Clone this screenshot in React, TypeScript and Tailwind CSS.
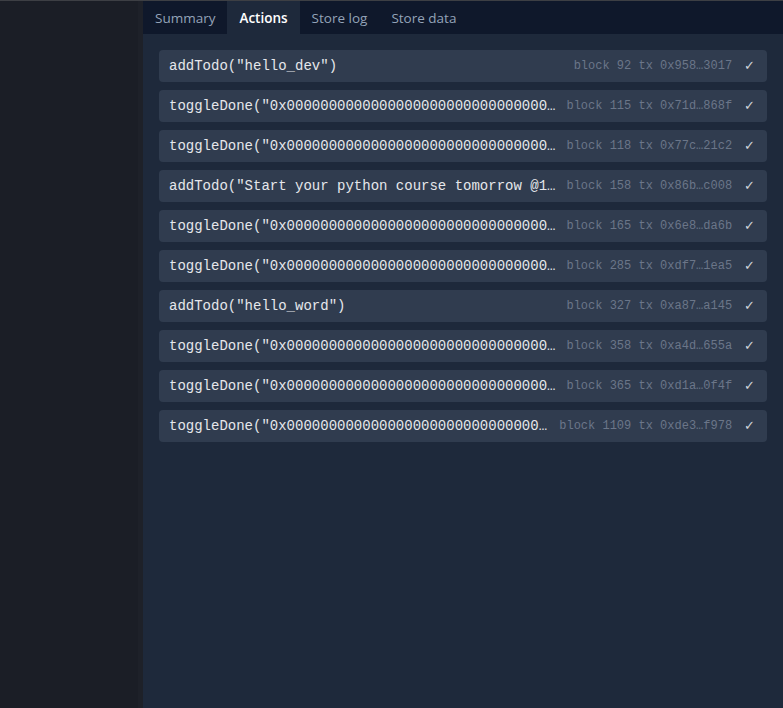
import { useState } from 'react';

type Action = { call: string; block: number; tx: string };

const hash = '0x' + '0'.repeat(62) + '01';

const actions: Action[] = [
  { call: 'addTodo("hello_dev")', block: 92, tx: '0x958…3017' },
  { call: `toggleDone("${hash}")`, block: 115, tx: '0x71d…868f' },
  { call: `toggleDone("${hash.slice(0, -1)}2")`, block: 118, tx: '0x77c…21c2' },
  { call: 'addTodo("Start your python course tomorrow @10am")', block: 158, tx: '0x86b…c008' },
  { call: `toggleDone("${hash.slice(0, -1)}3")`, block: 165, tx: '0x6e8…da6b' },
  { call: `toggleDone("${hash.slice(0, -1)}4")`, block: 285, tx: '0xdf7…1ea5' },
  { call: 'addTodo("hello_word")', block: 327, tx: '0xa87…a145' },
  { call: `toggleDone("${hash.slice(0, -1)}5")`, block: 358, tx: '0xa4d…655a' },
  { call: `toggleDone("${hash.slice(0, -1)}6")`, block: 365, tx: '0xd1a…0f4f' },
  { call: `toggleDone("${hash.slice(0, -1)}7")`, block: 1109, tx: '0xde3…f978' },
];

const tabs = ['Summary', 'Actions', 'Store log', 'Store data'];

export default function App() {
  const [tab, setTab] = useState('Actions');

  return (
    <div className="h-[708px] w-full flex flex-col bg-[#1b1e26] font-['Open_Sans',sans-serif]">
      <div className="h-px bg-[#3d3f44]" />
      <div className="flex-1 flex min-h-0">
        <aside className="w-[138px] bg-[#1b1e26]" />
        <div className="w-[5px] bg-[#1e2129]" />
        <main className="flex-1 flex flex-col bg-[#1e293b] min-w-0">
          <nav className="flex h-[33px] bg-[#0f182b]">
            {tabs.map((t) => (
              <button
                key={t}
                type="button"
                onClick={() => setTab(t)}
                className={`px-3 pt-0.5 text-[13.5px] leading-none ${
                  tab === t
                    ? 'bg-[#1e293b] text-white font-semibold'
                    : 'text-[#94a3b8]'
                }`}
              >
                {t}
              </button>
            ))}
          </nav>

          <ul className="flex flex-col gap-2 p-4">
            {actions.map((a) => (
              <li
                key={a.block}
                className="h-8 flex items-center gap-2.5 pl-2.5 pr-3 rounded bg-[#303c4f] font-['Liberation_Mono',monospace]"
              >
                <span className="flex-1 min-w-0 truncate text-[14px] text-[#e5e7eb]">
                  {a.call}
                </span>
                <span className="shrink-0 text-[12px] text-[#6b7689]">
                  block {a.block} tx {a.tx}
                </span>
                <span className="shrink-0 ml-0.5 text-[13px] text-[#d1d5db] font-['DejaVu_Sans',sans-serif]">
                  ✓
                </span>
              </li>
            ))}
          </ul>
        </main>
      </div>
    </div>
  );
}
